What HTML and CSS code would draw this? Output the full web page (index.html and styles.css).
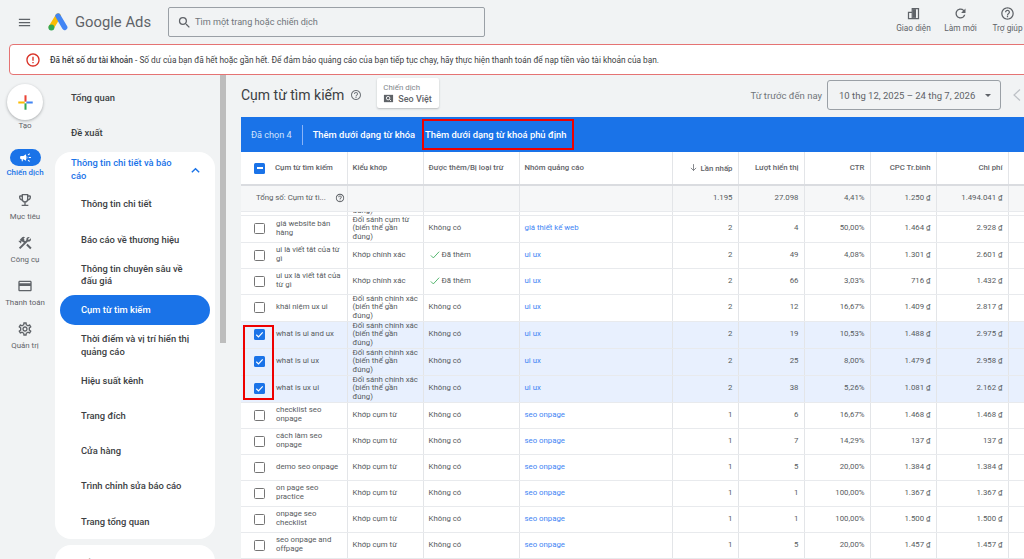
FILE: index.html
```html
<!DOCTYPE html>
<html>
<head>
    <meta charset="utf-8">
    <title>Cụm từ tìm kiếm - Google Ads</title>
    <link rel="stylesheet" href="styles.css">
</head>
<body>
    <svg class="defs" width="0" height="0">
        <symbol id="i-help" viewBox="0 0 24 24"><path d="M11 18h2v-2h-2v2zm1-16C6.48 2 2 6.48 2 12s4.48 10 10 10 10-4.48 10-10S17.52 2 12 2zm0 18c-4.41 0-8-3.59-8-8s3.59-8 8-8 8 3.59 8 8-3.59 8-8 8zm0-14c-2.21 0-4 1.79-4 4h2c0-1.1.9-2 2-2s2 .9 2 2c0 2-3 1.75-3 5h2c0-2.25 3-2.5 3-5 0-2.21-1.79-4-4-4z"/></symbol>
        <symbol id="i-check" viewBox="0 0 12 12"><path d="M2.5 6.3l2.4 2.3 4.6-5" fill="none" stroke="#fff" stroke-width="1.3"/></symbol>
    </svg>

    <header class="topbar">
        <svg class="menu-icon" viewBox="0 0 24 24"><path d="M3 18h18v-2H3v2zm0-5h18v-2H3v2zm0-7v2h18V6H3z"/></svg>
        <svg class="logo" viewBox="0 0 20 18">
            <path d="M10.2 3L3.5 14" stroke="#fbbc04" stroke-width="5.4" stroke-linecap="round" fill="none"/>
            <path d="M10 3l6.7 11.4" stroke="#4285f4" stroke-width="5.4" stroke-linecap="round" fill="none"/>
            <circle cx="3.4" cy="14.4" r="3" fill="#34a853"/>
        </svg>
        <span class="brand">Google Ads</span>
        <div class="search">
            <svg viewBox="0 0 24 24"><path d="M15.5 14h-.79l-.28-.27A6.471 6.471 0 0 0 16 9.5 6.5 6.5 0 1 0 9.5 16c1.61 0 3.09-.59 4.23-1.57l.27.28v.79l5 4.99L20.49 19l-4.99-5zm-6 0C7.01 14 5 11.99 5 9.5S7.01 5 9.5 5 14 7.01 14 9.5 11.99 14 9.5 14z"/></svg>
            <span>Tìm một trang hoặc chiến dịch</span>
        </div>
        <div class="actions">
            <div class="action">
                <svg viewBox="0 0 24 24"><path d="M9 3h12v18H3V9h6V3zm2 2v14h8V5h-8zM5 11v8h4v-8H5z" fill-rule="evenodd"/><path d="M11 5h5v14h-5z"/></svg>
                <span>Giao diện</span>
            </div>
            <div class="action">
                <svg viewBox="0 0 24 24"><path d="M17.65 6.35A7.958 7.958 0 0 0 12 4c-4.42 0-7.99 3.58-7.99 8s3.57 8 7.99 8c3.73 0 6.84-2.55 7.73-6h-2.08A5.99 5.99 0 0 1 12 18c-3.31 0-6-2.69-6-6s2.69-6 6-6c1.66 0 3.14.69 4.22 1.78L13 11h7V4l-2.35 2.35z"/></svg>
                <span>Làm mới</span>
            </div>
            <div class="action">
                <svg viewBox="0 0 24 24"><use href="#i-help"/></svg>
                <span>Trợ giúp</span>
            </div>
        </div>
    </header>

    <div class="alert">
        <svg viewBox="0 0 24 24"><path d="M11 15h2v2h-2v-2zm0-8h2v6h-2V7zm1-5C6.47 2 2 6.48 2 12s4.47 10 10 10 10-4.48 10-10S17.53 2 12 2zm0 18c-4.42 0-8-3.58-8-8s3.58-8 8-8 8 3.58 8 8-3.58 8-8 8z"/></svg>
        <p><b>Đã hết số dư tài khoản</b> - Số dư của bạn đã hết hoặc gần hết. Để đảm bảo quảng cáo của bạn tiếp tục chạy, hãy thực hiện thanh toán để nạp tiền vào tài khoản của bạn.</p>
    </div>

    <div class="main">
        <nav class="rail">
            <div class="create">
                <svg viewBox="0 0 20 20">
                    <path d="M1.5 10H9" stroke="#fbbc04" stroke-width="2.4"/>
                    <path d="M10 1.5V9" stroke="#ea4335" stroke-width="2.4"/>
                    <path d="M11 10h7.5" stroke="#4285f4" stroke-width="2.4"/>
                    <path d="M10 11v7.5" stroke="#34a853" stroke-width="2.4"/>
                </svg>
            </div>
            <span class="create-label">Tạo</span>
            <div class="rail-item active">
                <div class="rail-pill"><svg viewBox="0 0 24 24"><path d="M18 11v2h4v-2h-4zm-2 6.61c.96.71 2.21 1.65 3.2 2.39.4-.53.8-1.07 1.2-1.6-.99-.74-2.24-1.68-3.2-2.4-.4.54-.8 1.08-1.2 1.61zM20.4 5.6c-.4-.53-.8-1.07-1.2-1.6-.99.74-2.24 1.68-3.2 2.4.4.53.8 1.07 1.2 1.6.96-.72 2.21-1.65 3.2-2.4zM4 9c-1.1 0-2 .9-2 2v2c0 1.1.9 2 2 2h1v4h2v-4h1l5 3V6L8 9H4zm11.5 3c0-1.33-.58-2.53-1.5-3.35v6.69c.92-.81 1.5-2.01 1.5-3.34z"/></svg></div>
                <span>Chiến dịch</span>
            </div>
            <div class="rail-item">
                <svg viewBox="0 0 24 24"><path d="M19 5h-2V3H7v2H5c-1.1 0-2 .9-2 2v1c0 2.55 1.92 4.63 4.39 4.94.63 1.5 1.98 2.63 3.61 2.96V19H7v2h10v-2h-4v-3.1c1.63-.33 2.98-1.46 3.61-2.96C19.08 12.63 21 10.55 21 8V7c0-1.1-.9-2-2-2zM5 8V7h2v3.82C5.84 10.4 5 9.3 5 8zm7 6c-1.65 0-3-1.35-3-3V5h6v6c0 1.65-1.35 3-3 3zm7-6c0 1.3-.84 2.4-2 2.82V7h2v1z"/></svg>
                <span>Mục tiêu</span>
            </div>
            <div class="rail-item">
                <svg viewBox="0 0 24 24"><path d="M13.78 15.3l6 6 2.11-2.16-6-6zM17.5 10c1.93 0 3.5-1.57 3.5-3.5 0-.58-.16-1.12-.41-1.6l-2.7 2.7-1.49-1.49 2.7-2.7c-.48-.25-1.02-.41-1.6-.41C15.57 3 14 4.57 14 6.5c0 .41.08.8.21 1.16l-1.85 1.85-1.78-1.78.71-.71-1.41-1.41L12 3.49c-1.17-1.17-3.07-1.17-4.24 0L4.22 7.03l1.41 1.41H2.81l-.71.71 3.54 3.54.71-.71V9.15l1.41 1.41.71-.71 1.78 1.78-7.41 7.41 2.12 2.12L16.34 9.79c.36.13.75.21 1.16.21z"/></svg>
                <span>Công cụ</span>
            </div>
            <div class="rail-item">
                <svg viewBox="0 0 24 24"><path d="M20 4H4c-1.11 0-1.99.89-1.99 2L2 18c0 1.11.89 2 2 2h16c1.11 0 2-.89 2-2V6c0-1.11-.89-2-2-2zm0 14H4v-6h16v6zm0-10H4V6h16v2z"/></svg>
                <span>Thanh toán</span>
            </div>
            <div class="rail-item">
                <svg viewBox="0 0 24 24"><path d="M19.43 12.98c.04-.32.07-.64.07-.98 0-.34-.03-.66-.07-.98l2.11-1.65c.19-.15.24-.42.12-.64l-2-3.46c-.09-.16-.26-.25-.44-.25-.06 0-.12.01-.17.03l-2.49 1c-.52-.4-1.08-.73-1.69-.98l-.38-2.65C14.46 2.18 14.25 2 14 2h-4c-.25 0-.46.18-.49.42l-.38 2.65c-.61.25-1.17.59-1.69.98l-2.49-1c-.06-.02-.12-.03-.18-.03-.17 0-.34.09-.43.25l-2 3.46c-.13.22-.07.49.12.64l2.11 1.65c-.04.32-.07.65-.07.98 0 .33.03.66.07.98l-2.11 1.65c-.19.15-.24.42-.12.64l2 3.46c.09.16.26.25.44.25.06 0 .12-.01.17-.03l2.49-1c.52.4 1.08.73 1.69.98l.38 2.65c.03.24.24.42.49.42h4c.25 0 .46-.18.49-.42l.38-2.65c.61-.25 1.17-.59 1.69-.98l2.49 1c.06.02.12.03.18.03.17 0 .34-.09.43-.25l2-3.46c.12-.22.07-.49-.12-.64l-2.11-1.65zm-1.98-1.71c.04.31.05.52.05.73 0 .21-.02.43-.05.73l-.14 1.13.89.7 1.08.84-.7 1.21-1.27-.51-1.04-.42-.9.68c-.43.32-.84.56-1.25.73l-1.06.43-.16 1.13-.2 1.35h-1.4l-.19-1.35-.16-1.13-1.06-.43c-.43-.18-.83-.41-1.23-.71l-.91-.7-1.06.43-1.27.51-.7-1.21 1.08-.84.89-.7-.14-1.13c-.03-.31-.05-.54-.05-.74s.02-.43.05-.73l.14-1.13-.89-.7-1.08-.84.7-1.21 1.27.51 1.04.42.9-.68c.43-.32.84-.56 1.25-.73l1.06-.43.16-1.13.2-1.35h1.39l.19 1.35.16 1.13 1.06.43c.43.18.83.41 1.23.71l.91.7 1.06-.43 1.27-.51.7 1.21-1.07.85-.89.7.14 1.13zM12 8c-2.21 0-4 1.79-4 4s1.79 4 4 4 4-1.79 4-4-1.79-4-4-4zm0 6c-1.1 0-2-.9-2-2s.9-2 2-2 2 .9 2 2-.9 2-2 2z"/></svg>
                <span>Quản trị</span>
            </div>
        </nav>

        <nav class="sidenav">
            <a class="nav-top">Tổng quan</a>
            <a class="nav-top">Đề xuất</a>
            <div class="nav-panel">
                <div class="nav-group open">
                    <span>Thông tin chi tiết và báo cáo</span>
                    <svg viewBox="0 0 12 12"><path d="M2 8l4-4 4 4" fill="none" stroke="#1a73e8" stroke-width="1.5"/></svg>
                </div>
                <a class="nav-sub">Thông tin chi tiết</a>
                <a class="nav-sub">Báo cáo về thương hiệu</a>
                <a class="nav-sub">Thông tin chuyên sâu về đấu giá</a>
                <a class="nav-sub current">Cụm từ tìm kiếm</a>
                <a class="nav-sub">Thời điểm và vị trí hiển thị quảng cáo</a>
                <a class="nav-sub">Hiệu suất kênh</a>
                <a class="nav-sub">Trang đích</a>
                <a class="nav-sub">Cửa hàng</a>
                <a class="nav-sub">Trình chỉnh sửa báo cáo</a>
                <a class="nav-sub">Trang tổng quan</a>
            </div>
            <div class="nav-panel">
                <div class="nav-group">
                    <span>Chiến dịch</span>
                    <svg viewBox="0 0 12 12"><path d="M2 4l4 4 4-4" fill="none" stroke="#5f6368" stroke-width="1.5"/></svg>
                </div>
            </div>
        </nav>

        <div class="scrollbar"><div class="thumb"></div></div>

        <section class="content">
            <div class="title-row">
                <h1>Cụm từ tìm kiếm</h1>
                <svg class="help" viewBox="0 0 24 24"><use href="#i-help"/></svg>
                <div class="campaign-chip">
                    <span class="chip-label">Chiến dịch</span>
                    <span class="chip-value">
                        <svg viewBox="0 0 12 12"><path d="M1 2h10v8H1z" fill="#5f6368"/><circle cx="5.6" cy="5.6" r="1.9" fill="none" stroke="#fff" stroke-width="1"/><path d="M7 7l1.7 1.7" stroke="#fff" stroke-width="1"/></svg>
                        Seo Việt
                    </span>
                </div>
                <span class="range-label">Từ trước đến nay</span>
                <div class="range-box">
                    <span>10 thg 12, 2025 – 24 thg 7, 2026</span>
                    <i class="caret"></i>
                </div>
                <svg class="prev" viewBox="0 0 10 14"><path d="M8 1.5L2 7l6 5.5" fill="none" stroke="#bdc1c6" stroke-width="1.2"/></svg>
            </div>

            <div class="select-bar">
                <span class="selected-count">Đã chọn 4</span>
                <span class="bar-sep"></span>
                <a class="bar-link">Thêm dưới dạng từ khóa</a>
                <a class="bar-link marked">Thêm dưới dạng từ khoá phủ định</a>
            </div>

            <div class="table-wrap">
                <table class="terms">
                    <colgroup>
                        <col class="c-check"><col class="c-term"><col class="c-match"><col class="c-added"><col class="c-group">
                        <col class="c-num"><col class="c-num"><col class="c-num"><col class="c-num"><col class="c-cost"><col class="c-end">
                    </colgroup>
                    <thead>
                        <tr class="head">
                            <th class="box-cell"><span class="box mixed"></span></th>
                            <th>Cụm từ tìm kiếm</th>
                            <th>Kiểu khớp</th>
                            <th>Được thêm/Bị loại trừ</th>
                            <th>Nhóm quảng cáo</th>
                            <th class="num"><svg class="sort" viewBox="0 0 12 12"><path d="M6 1.5v8.5M2.5 6.5L6 10l3.5-3.5" fill="none" stroke="#5f6368" stroke-width="1"/></svg>Lần nhấp</th>
                            <th class="num">Lượt hiển thị</th>
                            <th class="num">CTR</th>
                            <th class="num">CPC Tr.bình</th>
                            <th class="num">Chi phí</th>
                            <th></th>
                        </tr>
                        <tr class="total">
                            <td colspan="2"><div class="total-cell">Tổng số: Cụm từ tì...<svg viewBox="0 0 24 24"><use href="#i-help"/></svg></div></td>
                            <td></td><td></td><td></td>
                            <td class="num">1.195</td><td class="num">27.098</td><td class="num">4,41%</td><td class="num">1.250 ₫</td><td class="num">1.494.041 ₫</td><td></td>
                        </tr>
                    </thead>
                    <tbody>
                        <tr class="cut">
                            <td></td><td></td><td><div class="cut-text">đúng)</div></td><td></td><td></td><td></td><td></td><td></td><td></td><td></td><td></td>
                        </tr>
                        <tr class="tall">
                            <td class="box-cell"><span class="box"></span></td><td>giá website bán hàng</td><td>Đối sánh cụm từ (biến thể gần<br>đúng)</td><td>Không có</td><td><a>giá thiết kế web</a></td>
                            <td class="num">2</td><td class="num">4</td><td class="num">50,00%</td><td class="num">1.464 ₫</td><td class="num">2.928 ₫</td><td></td>
                        </tr>
                        <tr>
                            <td class="box-cell"><span class="box"></span></td><td>ui là viết tắt của từ gì</td><td>Khớp chính xác</td><td><span class="added"><svg viewBox="0 0 12 12"><path d="M1 6.5l3 3 7-7.5" fill="none" stroke="#34a853" stroke-width="1"/></svg>Đã thêm</span></td><td><a>ui ux</a></td>
                            <td class="num">2</td><td class="num">49</td><td class="num">4,08%</td><td class="num">1.301 ₫</td><td class="num">2.601 ₫</td><td></td>
                        </tr>
                        <tr>
                            <td class="box-cell"><span class="box"></span></td><td>ui ux là viết tắt của từ gì</td><td>Khớp chính xác</td><td><span class="added"><svg viewBox="0 0 12 12"><path d="M1 6.5l3 3 7-7.5" fill="none" stroke="#34a853" stroke-width="1"/></svg>Đã thêm</span></td><td><a>ui ux</a></td>
                            <td class="num">2</td><td class="num">66</td><td class="num">3,03%</td><td class="num">716 ₫</td><td class="num">1.432 ₫</td><td></td>
                        </tr>
                        <tr class="tall">
                            <td class="box-cell"><span class="box"></span></td><td>khái niệm ux ui</td><td>Đối sánh chính xác (biến thể gần<br>đúng)</td><td>Không có</td><td><a>ui ux</a></td>
                            <td class="num">2</td><td class="num">12</td><td class="num">16,67%</td><td class="num">1.409 ₫</td><td class="num">2.817 ₫</td><td></td>
                        </tr>
                        <tr class="tall picked">
                            <td class="box-cell"><span class="box on"><svg viewBox="0 0 12 12"><use href="#i-check"/></svg></span></td><td>what is ui and ux</td><td>Đối sánh chính xác (biến thể gần<br>đúng)</td><td>Không có</td><td><a>ui ux</a></td>
                            <td class="num">2</td><td class="num">19</td><td class="num">10,53%</td><td class="num">1.488 ₫</td><td class="num">2.975 ₫</td><td></td>
                        </tr>
                        <tr class="tall picked">
                            <td class="box-cell"><span class="box on"><svg viewBox="0 0 12 12"><use href="#i-check"/></svg></span></td><td>what is ui ux</td><td>Đối sánh chính xác (biến thể gần<br>đúng)</td><td>Không có</td><td><a>ui ux</a></td>
                            <td class="num">2</td><td class="num">25</td><td class="num">8,00%</td><td class="num">1.479 ₫</td><td class="num">2.958 ₫</td><td></td>
                        </tr>
                        <tr class="tall picked">
                            <td class="box-cell"><span class="box on"><svg viewBox="0 0 12 12"><use href="#i-check"/></svg></span></td><td>what is ux ui</td><td>Đối sánh chính xác (biến thể gần<br>đúng)</td><td>Không có</td><td><a>ui ux</a></td>
                            <td class="num">2</td><td class="num">38</td><td class="num">5,26%</td><td class="num">1.081 ₫</td><td class="num">2.162 ₫</td><td></td>
                        </tr>
                        <tr>
                            <td class="box-cell"><span class="box"></span></td><td>checklist seo onpage</td><td>Khớp cụm từ</td><td>Không có</td><td><a>seo onpage</a></td>
                            <td class="num">1</td><td class="num">6</td><td class="num">16,67%</td><td class="num">1.468 ₫</td><td class="num">1.468 ₫</td><td></td>
                        </tr>
                        <tr>
                            <td class="box-cell"><span class="box"></span></td><td>cách làm seo onpage</td><td>Khớp cụm từ</td><td>Không có</td><td><a>seo onpage</a></td>
                            <td class="num">1</td><td class="num">7</td><td class="num">14,29%</td><td class="num">137 ₫</td><td class="num">137 ₫</td><td></td>
                        </tr>
                        <tr>
                            <td class="box-cell"><span class="box"></span></td><td>demo seo onpage</td><td>Khớp cụm từ</td><td>Không có</td><td><a>seo onpage</a></td>
                            <td class="num">1</td><td class="num">5</td><td class="num">20,00%</td><td class="num">1.384 ₫</td><td class="num">1.384 ₫</td><td></td>
                        </tr>
                        <tr>
                            <td class="box-cell"><span class="box"></span></td><td>on page seo practice</td><td>Khớp cụm từ</td><td>Không có</td><td><a>seo onpage</a></td>
                            <td class="num">1</td><td class="num">1</td><td class="num">100,00%</td><td class="num">1.367 ₫</td><td class="num">1.367 ₫</td><td></td>
                        </tr>
                        <tr>
                            <td class="box-cell"><span class="box"></span></td><td>onpage seo checklist</td><td>Khớp cụm từ</td><td>Không có</td><td><a>seo onpage</a></td>
                            <td class="num">1</td><td class="num">1</td><td class="num">100,00%</td><td class="num">1.500 ₫</td><td class="num">1.500 ₫</td><td></td>
                        </tr>
                        <tr>
                            <td class="box-cell"><span class="box"></span></td><td>seo onpage and offpage</td><td>Khớp cụm từ</td><td>Không có</td><td><a>seo onpage</a></td>
                            <td class="num">1</td><td class="num">5</td><td class="num">20,00%</td><td class="num">1.457 ₫</td><td class="num">1.457 ₫</td><td></td>
                        </tr>
                        <tr>
                            <td></td><td></td><td></td><td></td><td></td><td></td><td></td><td></td><td></td><td></td><td></td>
                        </tr>
                    </tbody>
                </table>
                <div class="marker"></div>
            </div>
        </section>
    </div>
</body>
</html>
```

FILE: styles.css
```css
* {
    box-sizing: border-box;
}
html, body {
    height: 100%;
}
body {
    margin: 0;
    overflow: hidden;
    background-color: #f1f3f4;
    color: #5f6368;
    font-family: Roboto, "Liberation Sans", sans-serif;
}
.defs {
    position: absolute;
}
svg {
    display: block;
    fill: currentColor;
}

.topbar {
    display: flex;
    align-items: center;
    height: 44px;
    padding-left: 17px;
}
.menu-icon {
    width: 15px;
    height: 15px;
    color: #5f6368;
}
.logo {
    width: 20px;
    height: 18px;
    margin-left: 16px;
}
.brand {
    margin-left: 7px;
    width: 93px;
    font-size: 14.8px;
    color: #5f6368;
}
.search {
    display: flex;
    align-items: center;
    width: 317px;
    height: 30px;
    padding-left: 8px;
    border: 1px solid #9aa0a6;
    border-radius: 2px;
    font-size: 9.1px;
    color: #70757a;
}
.search svg {
    width: 15px;
    height: 15px;
    margin-right: 3px;
    color: #5f6368;
}
.actions {
    display: flex;
    align-self: flex-start;
    margin-left: auto;
    margin-right: -7px;
    padding-top: 5.5px;
}
.action {
    display: flex;
    flex-direction: column;
    align-items: center;
    width: 47px;
    font-size: 8.3px;
    line-height: 10px;
    color: #5f6368;
}
.action svg {
    width: 15px;
    height: 15px;
    margin: 0 0 2px;
}

.alert {
    display: flex;
    align-items: center;
    height: 31px;
    margin-left: 9px;
    margin-right: -4px;
    padding-left: 15px;
    background: white;
    border: 1px solid #e57373;
    border-radius: 4px;
    font-size: 8.3px;
    color: #3c4043;
}
.alert svg {
    width: 16px;
    height: 16px;
    color: #d93025;
}
.alert p {
    margin: 0 0 0 9px;
}
.alert b {
    font-weight: 500;
}

.main {
    display: flex;
    height: 484px;
    overflow: hidden;
}

.rail {
    flex: none;
    display: flex;
    flex-direction: column;
    align-items: center;
    width: 50px;
    padding-top: 9px;
}
.create {
    display: flex;
    align-items: center;
    justify-content: center;
    width: 36px;
    height: 36px;
    background: white;
    border-radius: 50%;
    box-shadow: 0 1px 3px rgba(60,64,67,0.4);
}
.create svg {
    width: 17px;
    height: 17px;
}
.create-label {
    line-height: 11px;
    font-size: 8px;
}
.rail-item {
    display: flex;
    flex-direction: column;
    align-items: center;
    height: 43px;
    font-size: 7.9px;
    line-height: 11px;
    white-space: nowrap;
}
.rail-item > svg {
    width: 16px;
    height: 16px;
    margin-top: 6px;
    margin-bottom: 3px;
    color: #5f6368;
}
.rail-pill {
    display: flex;
    align-items: center;
    justify-content: center;
    width: 31px;
    height: 17px;
    margin-top: 18px;
    margin-bottom: 1px;
    background: #1a73e8;
    border-radius: 9px;
}
.rail-pill svg {
    width: 13px;
    height: 13px;
    color: white;
}
.rail-item.active {
    height: 55px;
    color: #1a73e8;
    font-weight: 500;
}

.sidenav {
    flex: none;
    width: 160px;
    margin-left: 5px;
    font-size: 9.4px;
    line-height: 12.6px;
    font-weight: 500;
    color: #3c4043;
}
.nav-top {
    display: flex;
    align-items: center;
    height: 35px;
    padding-left: 16px;
}
.nav-top:first-child {
    margin-top: 6px;
}
.nav-panel {
    margin-top: 1px;
    margin-bottom: 6px;
    padding-top: 1px;
    background: white;
    border-radius: 16px;
}
.nav-group {
    display: flex;
    align-items: center;
    justify-content: space-between;
    height: 34px;
    padding: 0 14px 0 16px;
}
.nav-group span {
    width: 110px;
}
.nav-group svg {
    width: 11px;
    height: 11px;
}
.nav-group.open {
    color: #1a73e8;
}
.nav-sub {
    display: flex;
    align-items: center;
    height: 35.25px;
    padding: 0 20px 0 26px;
}
.nav-sub.current {
    height: 30px;
    margin: 2.6px 5px;
    padding-left: 21px;
    background: #1a73e8;
    border-radius: 15px;
    color: white;
}

.scrollbar {
    flex: none;
    width: 6px;
    margin-left: 5px;
}
.thumb {
    height: 268px;
    background: #bdbdbd;
}

.content {
    flex: 1;
    min-width: 0;
    margin-left: 15px;
}
.title-row {
    display: flex;
    align-items: center;
    height: 42px;
    padding-bottom: 2px;
}
h1 {
    margin: 0;
    font-size: 14px;
    font-weight: 400;
    color: #3c4043;
}
.help {
    width: 12px;
    height: 12px;
    margin-left: 6px;
    color: #70757a;
}
.campaign-chip {
    display: flex;
    flex-direction: column;
    justify-content: center;
    width: 62px;
    height: 30px;
    margin-left: 15px;
    margin-top: -4px;
    padding-left: 6px;
    background: white;
    border-radius: 2px;
    box-shadow: 0 1px 2px rgba(60,64,67,0.3);
}
.chip-label {
    font-size: 7.9px;
    line-height: 11px;
    color: #80868b;
}
.chip-value {
    display: flex;
    align-items: center;
    gap: 4px;
    font-size: 9px;
    line-height: 12px;
    font-weight: 500;
}
.chip-value svg {
    width: 11px;
    height: 11px;
}
.range-label {
    margin-left: auto;
    font-size: 9.5px;
    color: #70757a;
}
.range-box {
    display: flex;
    align-items: center;
    justify-content: space-between;
    width: 174px;
    height: 30px;
    margin-left: 5px;
    padding: 0 9px 0 11px;
    border: 1px solid #9aa0a6;
    border-radius: 3px;
    font-size: 9.5px;
    color: #5f6368;
}
.caret {
    border-left: 3.5px solid transparent;
    border-right: 3.5px solid transparent;
    border-top: 3.5px solid #5f6368;
}
.prev {
    width: 10px;
    height: 14px;
    margin: 0 2px 0 11px;
}

.select-bar {
    display: flex;
    align-items: center;
    height: 35px;
    padding-left: 10px;
    background: #1a73e8;
    font-size: 9.4px;
    font-weight: 500;
    color: white;
}
.selected-count {
    font-weight: 400;
    font-size: 9.1px;
    color: #d2e3fc;
}
.bar-sep {
    width: 1px;
    height: 20px;
    margin: 0 10px;
    background: #8ab4f8;
}
.bar-link.marked {
    display: flex;
    align-items: center;
    height: 31px;
    margin-left: 7px;
    padding: 0 5px 0 1px;
    border: 2px solid #ee0000;
}

.table-wrap {
    position: relative;
    background: white;
}
.terms {
    width: 783px;
    table-layout: fixed;
    border-collapse: collapse;
    font-size: 7.8px;
    line-height: 8.66px;
    color: #575b60;
}
.c-check { width: 29px; }
.c-term { width: 77px; }
.c-match { width: 76px; }
.c-added { width: 96px; }
.c-group { width: 153px; }
.c-num { width: 66px; }
.c-cost { width: 72px; }
.c-end { width: 16px; }
.terms th,
.terms td {
    padding: 0 5px;
    border-right: 1px solid #e3e5e8;
    border-bottom: 1px solid #e8eaed;
    text-align: left;
    vertical-align: middle;
    overflow: hidden;
}
.terms th:last-child,
.terms td:last-child {
    border-right: none;
}
.terms tr > :first-child:not([colspan]) {
    border-right: none;
}
.terms tr td:nth-child(2):not(:only-child) {
    padding-left: 6px;
}
.terms tbody td:nth-child(3) {
    padding-right: 1px;
}
.terms th {
    font-weight: 500;
    color: #5f6368;
}
.terms .num {
    text-align: right;
}
.terms a {
    color: #4285f4;
}
.head {
    height: 33px;
}
.head th {
    border-bottom: 2px solid #dadce0;
    background: white;
}
.total {
    height: 26px;
}
.total td {
    background: #f6f7f8;
}
.total-cell {
    display: flex;
    align-items: center;
    justify-content: space-between;
    margin-right: -3px;
    padding-left: 10px;
}
.total-cell svg {
    width: 10px;
    height: 10px;
}
.terms tbody tr {
    height: 26px;
}
.terms tbody tr.tall {
    height: 27px;
}
.terms tbody tr.cut {
    height: 3px;
}
.cut td {
    height: 3px;
    line-height: 0;
}
.cut-text {
    display: flex;
    align-items: flex-end;
    height: 3px;
    overflow: hidden;
    line-height: 9px;
}
.picked td {
    background: #e8f0fe;
}
.box-cell {
    padding: 0 0 0 13px !important;
}
.box {
    display: block;
    width: 11px;
    height: 11px;
    border: 1.5px solid #757575;
    border-radius: 1.5px;
    background: white;
}
.box.on {
    border: none;
    background: #1a73e8;
}
.box.mixed {
    position: relative;
    border: none;
    background: #1a73e8;
}
.box.mixed::after {
    content: "";
    position: absolute;
    left: 2.5px;
    right: 2.5px;
    top: 4.75px;
    height: 1.5px;
    background: white;
}
.added {
    display: flex;
    align-items: center;
    gap: 2px;
    padding-left: 1px;
}
.added svg {
    width: 10px;
    height: 10px;
}
.sort {
    display: inline-block;
    width: 9px;
    height: 9px;
    margin-right: 3px;
    vertical-align: -1px;
}
.marker {
    position: absolute;
    left: 2px;
    top: 173px;
    width: 31px;
    height: 75px;
    border: 2px solid #ee0000;
}
```
